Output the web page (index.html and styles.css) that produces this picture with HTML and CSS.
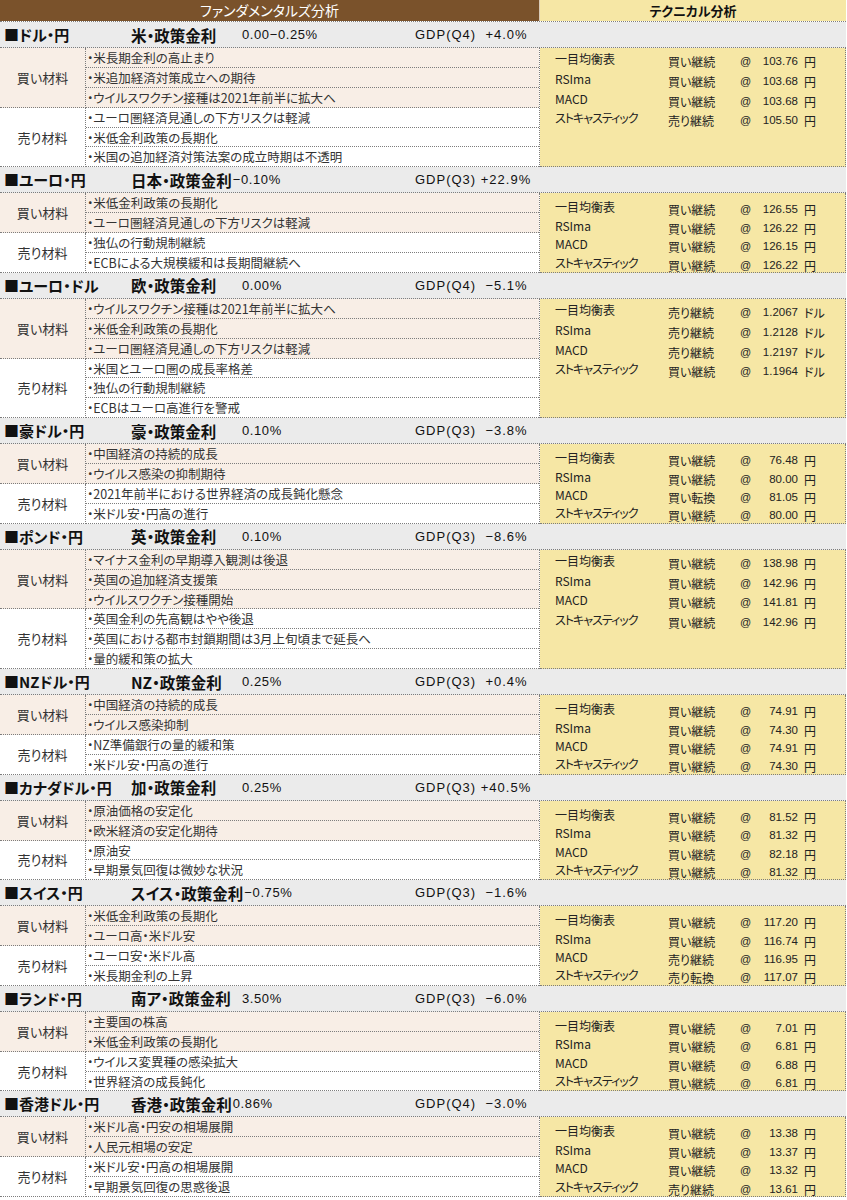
FILE: index.html
```html
<!DOCTYPE html>
<html lang="ja">
<head>
<meta charset="utf-8">
<title>ファンダメンタルズ分析 / テクニカル分析</title>
<link rel="stylesheet" href="styles.css">
</head>
<body>
<div class="sheet">
  <div class="top">
    <div class="top-fund">ファンダメンタルズ分析</div>
    <div class="top-tech">テクニカル分析</div>
  </div>

  <section class="sec six">
    <div class="sec-head">
      <span class="pair">■ドル・円</span>
      <span class="pol"><span class="policy">米・政策金利</span><span class="rate">0.00−0.25%</span></span>
      <span class="gdp">GDP(Q4)&nbsp; +4.0%</span>
    </div>
    <div class="sec-body">
      <div class="fund">
        <div class="group buy">
          <div class="label">買い材料</div>
          <ul class="items">
            <li>・米長期金利の高止まり</li>
            <li>・米追加経済対策成立への期待</li>
            <li>・ウイルスワクチン接種は2021年前半に拡大へ</li>
          </ul>
        </div>
        <div class="group sell">
          <div class="label">売り材料</div>
          <ul class="items">
            <li>・ユーロ圏経済見通しの下方リスクは軽減</li>
            <li>・米低金利政策の長期化</li>
            <li>・米国の追加経済対策法案の成立時期は不透明</li>
          </ul>
        </div>
      </div>
      <div class="tech">
        <div class="tl"><span class="tn">一目均衡表</span><span class="ts">買い継続</span><span class="ta">@</span><span class="tv">103.76</span><span class="tu">円</span></div>
        <div class="tl"><span class="tn">RSIma</span><span class="ts">買い継続</span><span class="ta">@</span><span class="tv">103.68</span><span class="tu">円</span></div>
        <div class="tl"><span class="tn">MACD</span><span class="ts">買い継続</span><span class="ta">@</span><span class="tv">103.68</span><span class="tu">円</span></div>
        <div class="tl"><span class="tn kana">ストキャスティック</span><span class="ts">売り継続</span><span class="ta">@</span><span class="tv">105.50</span><span class="tu">円</span></div>
      </div>
    </div>
  </section>

  <section class="sec four">
    <div class="sec-head">
      <span class="pair">■ユーロ・円</span>
      <span class="pol tight"><span class="policy">日本・政策金利</span><span class="rate">−0.10%</span></span>
      <span class="gdp">GDP(Q3) +22.9%</span>
    </div>
    <div class="sec-body">
      <div class="fund">
        <div class="group buy">
          <div class="label">買い材料</div>
          <ul class="items">
            <li>・米低金利政策の長期化</li>
            <li>・ユーロ圏経済見通しの下方リスクは軽減</li>
          </ul>
        </div>
        <div class="group sell">
          <div class="label">売り材料</div>
          <ul class="items">
            <li>・独仏の行動規制継続</li>
            <li>・ECBによる大規模緩和は長期間継続へ</li>
          </ul>
        </div>
      </div>
      <div class="tech">
        <div class="tl"><span class="tn">一目均衡表</span><span class="ts">買い継続</span><span class="ta">@</span><span class="tv">126.55</span><span class="tu">円</span></div>
        <div class="tl"><span class="tn">RSIma</span><span class="ts">買い継続</span><span class="ta">@</span><span class="tv">126.22</span><span class="tu">円</span></div>
        <div class="tl"><span class="tn">MACD</span><span class="ts">買い継続</span><span class="ta">@</span><span class="tv">126.15</span><span class="tu">円</span></div>
        <div class="tl"><span class="tn kana">ストキャスティック</span><span class="ts">買い継続</span><span class="ta">@</span><span class="tv">126.22</span><span class="tu">円</span></div>
      </div>
    </div>
  </section>

  <section class="sec six">
    <div class="sec-head">
      <span class="pair">■ユーロ・ドル</span>
      <span class="pol"><span class="policy">欧・政策金利</span><span class="rate">0.00%</span></span>
      <span class="gdp">GDP(Q4)&nbsp; −5.1%</span>
    </div>
    <div class="sec-body">
      <div class="fund">
        <div class="group buy">
          <div class="label">買い材料</div>
          <ul class="items">
            <li>・ウイルスワクチン接種は2021年前半に拡大へ</li>
            <li>・米低金利政策の長期化</li>
            <li>・ユーロ圏経済見通しの下方リスクは軽減</li>
          </ul>
        </div>
        <div class="group sell">
          <div class="label">売り材料</div>
          <ul class="items">
            <li>・米国とユーロ圏の成長率格差</li>
            <li>・独仏の行動規制継続</li>
            <li>・ECBはユーロ高進行を警戒</li>
          </ul>
        </div>
      </div>
      <div class="tech">
        <div class="tl"><span class="tn">一目均衡表</span><span class="ts">売り継続</span><span class="ta">@</span><span class="tv">1.2067</span><span class="tu">ドル</span></div>
        <div class="tl"><span class="tn">RSIma</span><span class="ts">売り継続</span><span class="ta">@</span><span class="tv">1.2128</span><span class="tu">ドル</span></div>
        <div class="tl"><span class="tn">MACD</span><span class="ts">売り継続</span><span class="ta">@</span><span class="tv">1.2197</span><span class="tu">ドル</span></div>
        <div class="tl"><span class="tn kana">ストキャスティック</span><span class="ts">買い継続</span><span class="ta">@</span><span class="tv">1.1964</span><span class="tu">ドル</span></div>
      </div>
    </div>
  </section>

  <section class="sec four">
    <div class="sec-head">
      <span class="pair">■豪ドル・円</span>
      <span class="pol"><span class="policy">豪・政策金利</span><span class="rate">0.10%</span></span>
      <span class="gdp">GDP(Q3)&nbsp; −3.8%</span>
    </div>
    <div class="sec-body">
      <div class="fund">
        <div class="group buy">
          <div class="label">買い材料</div>
          <ul class="items">
            <li>・中国経済の持続的成長</li>
            <li>・ウイルス感染の抑制期待</li>
          </ul>
        </div>
        <div class="group sell">
          <div class="label">売り材料</div>
          <ul class="items">
            <li>・2021年前半における世界経済の成長鈍化懸念</li>
            <li>・米ドル安・円高の進行</li>
          </ul>
        </div>
      </div>
      <div class="tech">
        <div class="tl"><span class="tn">一目均衡表</span><span class="ts">買い継続</span><span class="ta">@</span><span class="tv">76.48</span><span class="tu">円</span></div>
        <div class="tl"><span class="tn">RSIma</span><span class="ts">買い継続</span><span class="ta">@</span><span class="tv">80.00</span><span class="tu">円</span></div>
        <div class="tl"><span class="tn">MACD</span><span class="ts">買い転換</span><span class="ta">@</span><span class="tv">81.05</span><span class="tu">円</span></div>
        <div class="tl"><span class="tn kana">ストキャスティック</span><span class="ts">買い継続</span><span class="ta">@</span><span class="tv">80.00</span><span class="tu">円</span></div>
      </div>
    </div>
  </section>

  <section class="sec six">
    <div class="sec-head">
      <span class="pair">■ポンド・円</span>
      <span class="pol"><span class="policy">英・政策金利</span><span class="rate">0.10%</span></span>
      <span class="gdp">GDP(Q3)&nbsp; −8.6%</span>
    </div>
    <div class="sec-body">
      <div class="fund">
        <div class="group buy">
          <div class="label">買い材料</div>
          <ul class="items">
            <li>・マイナス金利の早期導入観測は後退</li>
            <li>・英国の追加経済支援策</li>
            <li>・ウイルスワクチン接種開始</li>
          </ul>
        </div>
        <div class="group sell">
          <div class="label">売り材料</div>
          <ul class="items">
            <li>・英国金利の先高観はやや後退</li>
            <li>・英国における都市封鎖期間は3月上旬頃まで延長へ</li>
            <li>・量的緩和策の拡大</li>
          </ul>
        </div>
      </div>
      <div class="tech">
        <div class="tl"><span class="tn">一目均衡表</span><span class="ts">買い継続</span><span class="ta">@</span><span class="tv">138.98</span><span class="tu">円</span></div>
        <div class="tl"><span class="tn">RSIma</span><span class="ts">買い継続</span><span class="ta">@</span><span class="tv">142.96</span><span class="tu">円</span></div>
        <div class="tl"><span class="tn">MACD</span><span class="ts">買い継続</span><span class="ta">@</span><span class="tv">141.81</span><span class="tu">円</span></div>
        <div class="tl"><span class="tn kana">ストキャスティック</span><span class="ts">買い継続</span><span class="ta">@</span><span class="tv">142.96</span><span class="tu">円</span></div>
      </div>
    </div>
  </section>

  <section class="sec four">
    <div class="sec-head">
      <span class="pair">■NZドル・円</span>
      <span class="pol"><span class="policy">NZ・政策金利</span><span class="rate">0.25%</span></span>
      <span class="gdp">GDP(Q3)&nbsp; +0.4%</span>
    </div>
    <div class="sec-body">
      <div class="fund">
        <div class="group buy">
          <div class="label">買い材料</div>
          <ul class="items">
            <li>・中国経済の持続的成長</li>
            <li>・ウイルス感染抑制</li>
          </ul>
        </div>
        <div class="group sell">
          <div class="label">売り材料</div>
          <ul class="items">
            <li>・NZ準備銀行の量的緩和策</li>
            <li>・米ドル安・円高の進行</li>
          </ul>
        </div>
      </div>
      <div class="tech">
        <div class="tl"><span class="tn">一目均衡表</span><span class="ts">買い継続</span><span class="ta">@</span><span class="tv">74.91</span><span class="tu">円</span></div>
        <div class="tl"><span class="tn">RSIma</span><span class="ts">買い継続</span><span class="ta">@</span><span class="tv">74.30</span><span class="tu">円</span></div>
        <div class="tl"><span class="tn">MACD</span><span class="ts">買い継続</span><span class="ta">@</span><span class="tv">74.91</span><span class="tu">円</span></div>
        <div class="tl"><span class="tn kana">ストキャスティック</span><span class="ts">買い継続</span><span class="ta">@</span><span class="tv">74.30</span><span class="tu">円</span></div>
      </div>
    </div>
  </section>

  <section class="sec four">
    <div class="sec-head">
      <span class="pair">■カナダドル・円</span>
      <span class="pol"><span class="policy">加・政策金利</span><span class="rate">0.25%</span></span>
      <span class="gdp">GDP(Q3) +40.5%</span>
    </div>
    <div class="sec-body">
      <div class="fund">
        <div class="group buy">
          <div class="label">買い材料</div>
          <ul class="items">
            <li>・原油価格の安定化</li>
            <li>・欧米経済の安定化期待</li>
          </ul>
        </div>
        <div class="group sell">
          <div class="label">売り材料</div>
          <ul class="items">
            <li>・原油安</li>
            <li>・早期景気回復は微妙な状況</li>
          </ul>
        </div>
      </div>
      <div class="tech">
        <div class="tl"><span class="tn">一目均衡表</span><span class="ts">買い継続</span><span class="ta">@</span><span class="tv">81.52</span><span class="tu">円</span></div>
        <div class="tl"><span class="tn">RSIma</span><span class="ts">買い継続</span><span class="ta">@</span><span class="tv">81.32</span><span class="tu">円</span></div>
        <div class="tl"><span class="tn">MACD</span><span class="ts">買い継続</span><span class="ta">@</span><span class="tv">82.18</span><span class="tu">円</span></div>
        <div class="tl"><span class="tn kana">ストキャスティック</span><span class="ts">買い継続</span><span class="ta">@</span><span class="tv">81.32</span><span class="tu">円</span></div>
      </div>
    </div>
  </section>

  <section class="sec four">
    <div class="sec-head">
      <span class="pair">■スイス・円</span>
      <span class="pol tight"><span class="policy">スイス・政策金利</span><span class="rate">−0.75%</span></span>
      <span class="gdp">GDP(Q3)&nbsp; −1.6%</span>
    </div>
    <div class="sec-body">
      <div class="fund">
        <div class="group buy">
          <div class="label">買い材料</div>
          <ul class="items">
            <li>・米低金利政策の長期化</li>
            <li>・ユーロ高・米ドル安</li>
          </ul>
        </div>
        <div class="group sell">
          <div class="label">売り材料</div>
          <ul class="items">
            <li>・ユーロ安・米ドル高</li>
            <li>・米長期金利の上昇</li>
          </ul>
        </div>
      </div>
      <div class="tech">
        <div class="tl"><span class="tn">一目均衡表</span><span class="ts">買い継続</span><span class="ta">@</span><span class="tv">117.20</span><span class="tu">円</span></div>
        <div class="tl"><span class="tn">RSIma</span><span class="ts">買い継続</span><span class="ta">@</span><span class="tv">116.74</span><span class="tu">円</span></div>
        <div class="tl"><span class="tn">MACD</span><span class="ts">売り継続</span><span class="ta">@</span><span class="tv">116.95</span><span class="tu">円</span></div>
        <div class="tl"><span class="tn kana">ストキャスティック</span><span class="ts">売り転換</span><span class="ta">@</span><span class="tv">117.07</span><span class="tu">円</span></div>
      </div>
    </div>
  </section>

  <section class="sec four">
    <div class="sec-head">
      <span class="pair">■ランド・円</span>
      <span class="pol"><span class="policy">南ア・政策金利</span><span class="rate">3.50%</span></span>
      <span class="gdp">GDP(Q3)&nbsp; −6.0%</span>
    </div>
    <div class="sec-body">
      <div class="fund">
        <div class="group buy">
          <div class="label">買い材料</div>
          <ul class="items">
            <li>・主要国の株高</li>
            <li>・米低金利政策の長期化</li>
          </ul>
        </div>
        <div class="group sell">
          <div class="label">売り材料</div>
          <ul class="items">
            <li>・ウイルス変異種の感染拡大</li>
            <li>・世界経済の成長鈍化</li>
          </ul>
        </div>
      </div>
      <div class="tech">
        <div class="tl"><span class="tn">一目均衡表</span><span class="ts">買い継続</span><span class="ta">@</span><span class="tv">7.01</span><span class="tu">円</span></div>
        <div class="tl"><span class="tn">RSIma</span><span class="ts">買い継続</span><span class="ta">@</span><span class="tv">6.81</span><span class="tu">円</span></div>
        <div class="tl"><span class="tn">MACD</span><span class="ts">買い継続</span><span class="ta">@</span><span class="tv">6.88</span><span class="tu">円</span></div>
        <div class="tl"><span class="tn kana">ストキャスティック</span><span class="ts">買い継続</span><span class="ta">@</span><span class="tv">6.81</span><span class="tu">円</span></div>
      </div>
    </div>
  </section>

  <section class="sec four">
    <div class="sec-head">
      <span class="pair">■香港ドル・円</span>
      <span class="pol tight"><span class="policy">香港・政策金利</span><span class="rate">0.86%</span></span>
      <span class="gdp">GDP(Q4)&nbsp; −3.0%</span>
    </div>
    <div class="sec-body">
      <div class="fund">
        <div class="group buy">
          <div class="label">買い材料</div>
          <ul class="items">
            <li>・米ドル高・円安の相場展開</li>
            <li>・人民元相場の安定</li>
          </ul>
        </div>
        <div class="group sell">
          <div class="label">売り材料</div>
          <ul class="items">
            <li>・米ドル安・円高の相場展開</li>
            <li>・早期景気回復の思惑後退</li>
          </ul>
        </div>
      </div>
      <div class="tech">
        <div class="tl"><span class="tn">一目均衡表</span><span class="ts">買い継続</span><span class="ta">@</span><span class="tv">13.38</span><span class="tu">円</span></div>
        <div class="tl"><span class="tn">RSIma</span><span class="ts">買い継続</span><span class="ta">@</span><span class="tv">13.37</span><span class="tu">円</span></div>
        <div class="tl"><span class="tn">MACD</span><span class="ts">買い継続</span><span class="ta">@</span><span class="tv">13.32</span><span class="tu">円</span></div>
        <div class="tl"><span class="tn kana">ストキャスティック</span><span class="ts">売り継続</span><span class="ta">@</span><span class="tv">13.61</span><span class="tu">円</span></div>
      </div>
    </div>
  </section>
</div>
</body>
</html>
```

FILE: styles.css
```css
* {
  box-sizing: border-box;
  margin: 0;
  padding: 0;
}

body {
  margin: 0;
  background: #ffffff;
  color: #222222;
  font-family: "Noto Sans CJK JP", "Liberation Sans", sans-serif;
  font-feature-settings: "palt";
}

.sheet {
  width: 846px;
}

/* top title band */
.top {
  display: flex;
  height: 22px;
  border-bottom: 1px dotted #7d7d7d;
}

.top-fund {
  width: 540px;
  background: #7a522b;
  border-right: 1px solid #d9cbb8;
  color: #ffffff;
  font-size: 14px;
  line-height: 21px;
  text-align: center;
}

.top-tech {
  flex: 1;
  background: #f6e7a5;
  color: #111111;
  font-size: 13px;
  font-weight: 700;
  line-height: 21px;
  text-align: center;
}

/* section header */
.sec-head {
  display: grid;
  grid-template-columns: 131px 284px 1fr;
  align-items: center;
  height: 26px;
  background: #ebebeb;
  border-bottom: 1px dotted #7d7d7d;
  color: #111111;
  white-space: nowrap;
}

.pair {
  padding-left: 4px;
  font-size: 15px;
  font-weight: 700;
}

.pol {
  display: flex;
  align-items: center;
}

.policy {
  min-width: 111px;
  font-size: 15.5px;
  font-weight: 700;
}

.pol.tight .policy {
  min-width: 0;
  margin-right: 1px;
}

.rate,
.gdp {
  font-family: "Liberation Sans", "Noto Sans CJK JP", sans-serif;
  font-size: 13px;
  letter-spacing: 0.6px;
}

.gdp {
  letter-spacing: 1px;
}

/* body */
.sec-body {
  display: flex;
}

.fund {
  width: 540px;
  border-right: 1px dotted #7d7d7d;
}

.group {
  display: flex;
}

.buy {
  background: #f8eee6;
}

.sell {
  background: #ffffff;
}

.label {
  width: 86px;
  display: flex;
  align-items: center;
  justify-content: center;
  border-right: 1px dotted #7d7d7d;
  border-bottom: 1px dotted #7d7d7d;
  color: #333333;
  font-size: 13px;
}

.items {
  flex: 1;
  list-style: none;
}

.items li {
  height: 19.9px;
  padding-left: 1px;
  border-bottom: 1px dotted #7d7d7d;
  color: #333333;
  font-size: 12.5px;
  line-height: 19px;
  white-space: nowrap;
}

/* technical panel */
.tech {
  flex: 1;
  background: #f6e7a5;
  border-right: 1px dotted #7d7d7d;
  border-bottom: 1px dotted #7d7d7d;
  color: #222222;
}

.six .tech {
  padding-top: 2px;
}

.four .tech {
  padding-top: 5px;
}

.tl {
  display: grid;
  grid-template-columns: 113px 72px 18px 40px auto;
  align-items: start;
  padding-left: 15px;
  white-space: nowrap;
}

.six .tl {
  height: 19.8px;
}

.four .tl {
  height: 18.4px;
}

.tn {
  font-size: 12px;
  line-height: 17px;
}

.tn.kana {
  letter-spacing: -1px;
}

.ts {
  padding-top: 3px;
  font-size: 12px;
  line-height: 17px;
}

.ta {
  padding-top: 3px;
  font-family: "Liberation Sans", sans-serif;
  font-size: 11px;
  line-height: 17px;
}

.tv {
  padding-top: 3px;
  font-family: "Liberation Sans", sans-serif;
  font-size: 11.5px;
  line-height: 17px;
  text-align: right;
}

.tu {
  padding-top: 3px;
  padding-left: 6px;
  font-size: 12px;
  line-height: 17px;
}
```
